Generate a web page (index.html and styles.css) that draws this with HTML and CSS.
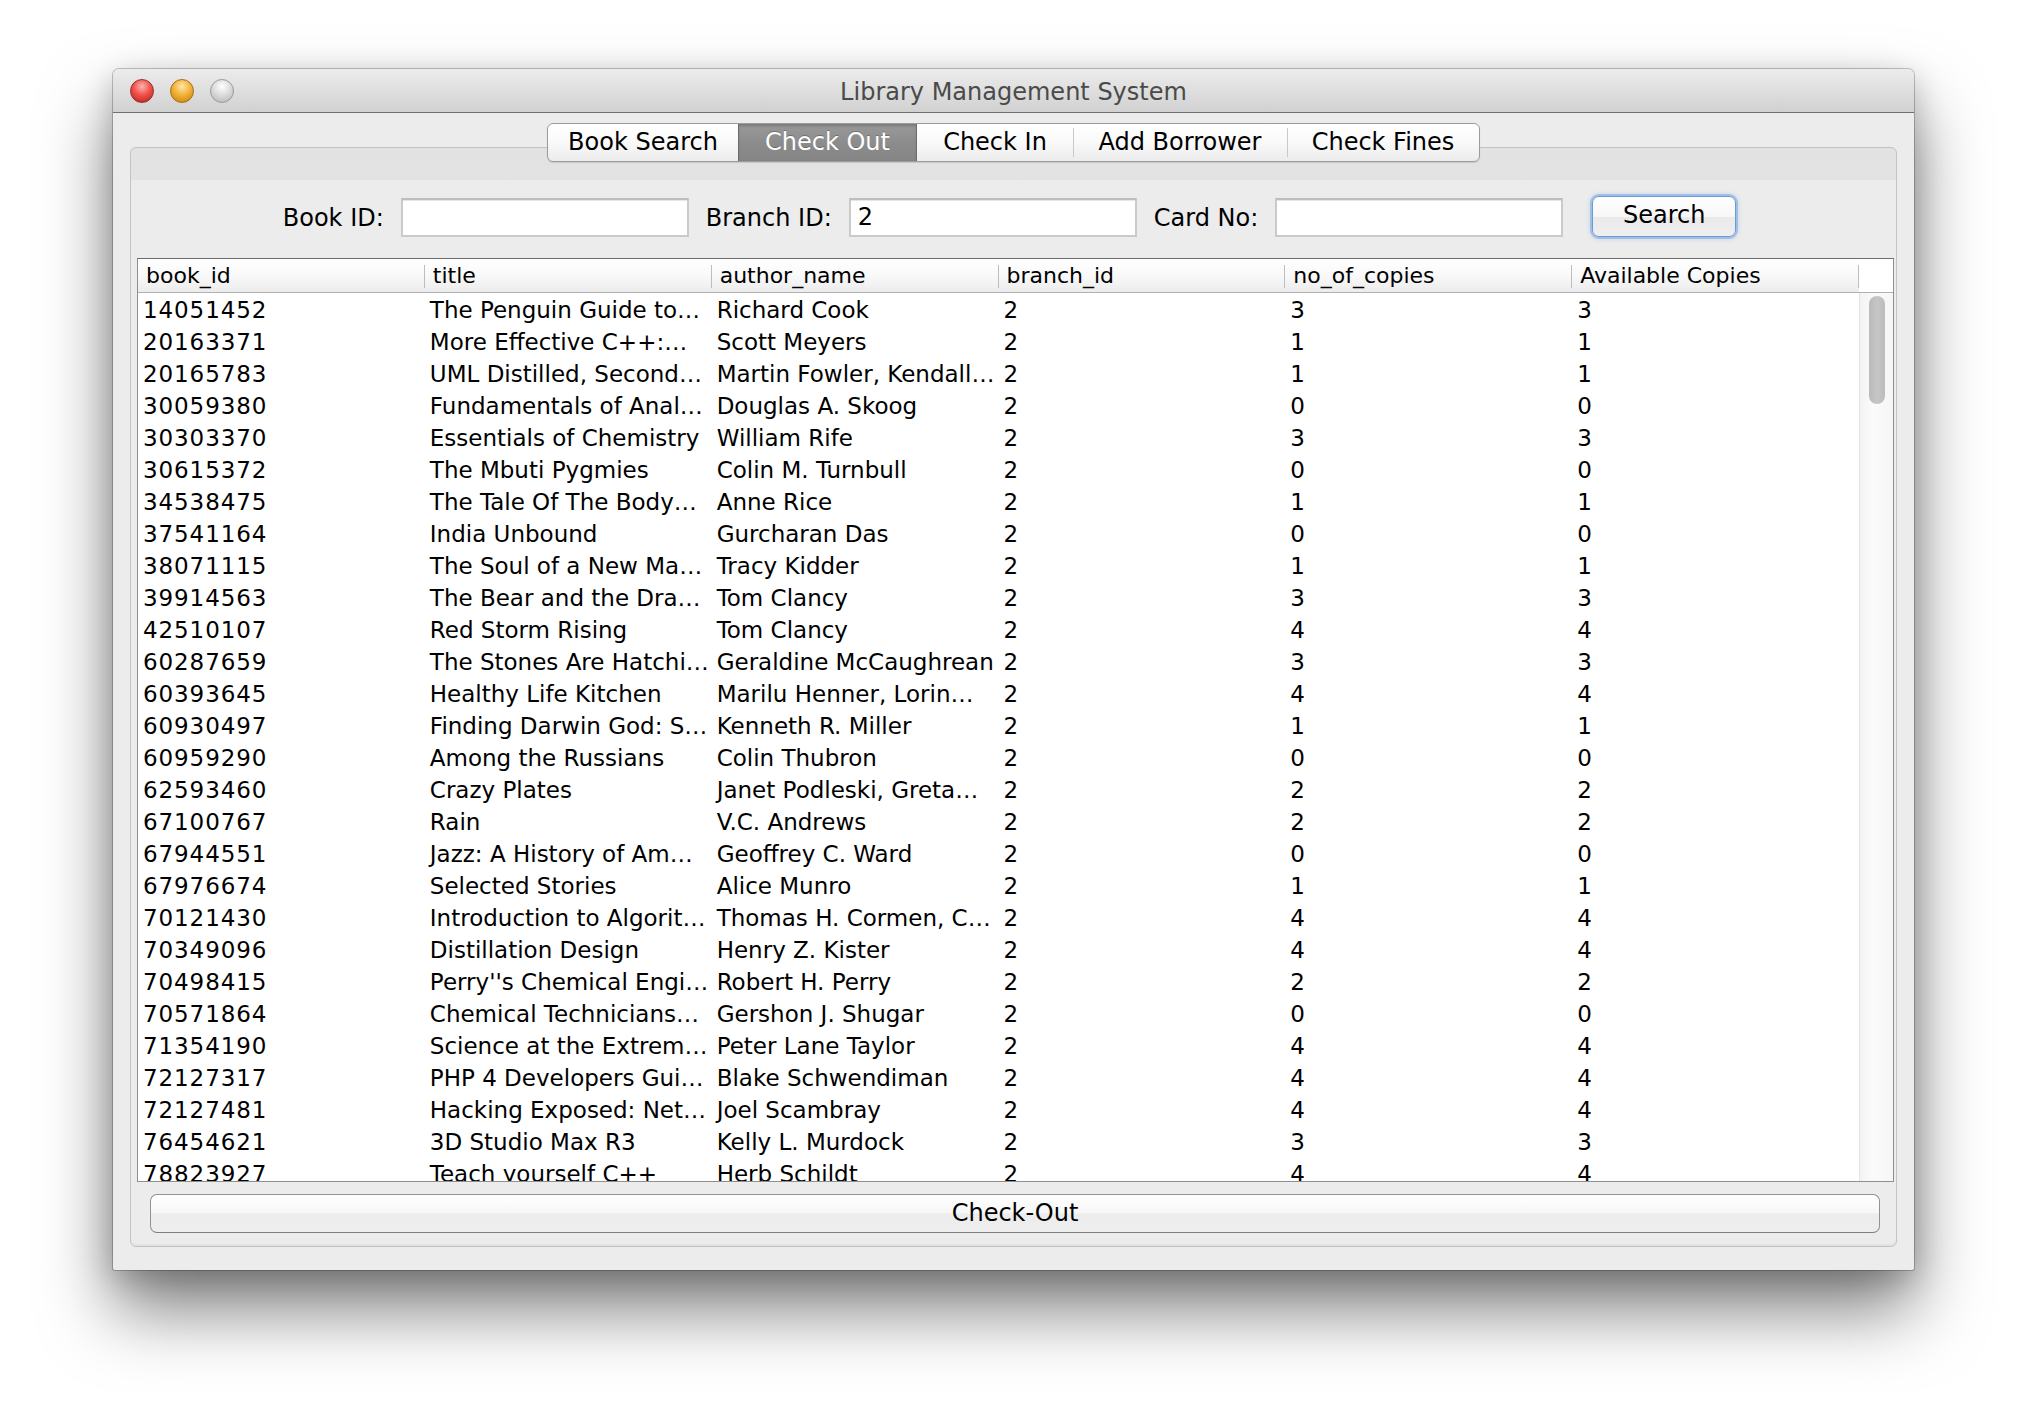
FILE: index.html
```html
<!DOCTYPE html>
<html>
<head>
<meta charset="utf-8">
<title>Library Management System</title>
<link rel="stylesheet" href="styles.css">
</head>
<body>
<div class="window">
  <div class="titlebar">
    <div class="lights">
      <span class="light red"></span>
      <span class="light yellow"></span>
      <span class="light grey"></span>
    </div>
    <div class="wtitle">Library Management System</div>
    <div></div>
  </div>
  <div class="wbody">
    <div class="tabs">
      <div class="tab t-search">Book Search</div>
      <div class="tab sel t-out">Check Out</div>
      <div class="tab t-in">Check In</div>
      <div class="tab sep t-add">Add Borrower</div>
      <div class="tab sep t-fines">Check Fines</div>
    </div>
    <div class="panel">
      <div class="searchrow">
        <label class="lbl">Book ID:</label>
        <div class="field"></div>
        <label class="lbl">Branch ID:</label>
        <div class="field">2</div>
        <label class="lbl">Card No:</label>
        <div class="field"></div>
        <div class="btn search">Search</div>
      </div>
      <div class="table">
        <div class="thead">
          <div class="th">book_id</div>
          <div class="th">title</div>
          <div class="th">author_name</div>
          <div class="th">branch_id</div>
          <div class="th">no_of_copies</div>
          <div class="th">Available Copies</div>
          <div class="corner"></div>
        </div>
        <div class="tbody">
          <div class="rows">
            <div class="row"><div>14051452</div><div>The Penguin Guide to…</div><div>Richard Cook</div><div>2</div><div>3</div><div>3</div></div>
            <div class="row"><div>20163371</div><div>More Effective C++:…</div><div>Scott Meyers</div><div>2</div><div>1</div><div>1</div></div>
            <div class="row"><div>20165783</div><div>UML Distilled, Second…</div><div>Martin Fowler, Kendall…</div><div>2</div><div>1</div><div>1</div></div>
            <div class="row"><div>30059380</div><div>Fundamentals of Anal…</div><div>Douglas A. Skoog</div><div>2</div><div>0</div><div>0</div></div>
            <div class="row"><div>30303370</div><div>Essentials of Chemistry</div><div>William Rife</div><div>2</div><div>3</div><div>3</div></div>
            <div class="row"><div>30615372</div><div>The Mbuti Pygmies</div><div>Colin M. Turnbull</div><div>2</div><div>0</div><div>0</div></div>
            <div class="row"><div>34538475</div><div>The Tale Of The Body…</div><div>Anne Rice</div><div>2</div><div>1</div><div>1</div></div>
            <div class="row"><div>37541164</div><div>India Unbound</div><div>Gurcharan Das</div><div>2</div><div>0</div><div>0</div></div>
            <div class="row"><div>38071115</div><div>The Soul of a New Ma…</div><div>Tracy Kidder</div><div>2</div><div>1</div><div>1</div></div>
            <div class="row"><div>39914563</div><div>The Bear and the Dra…</div><div>Tom Clancy</div><div>2</div><div>3</div><div>3</div></div>
            <div class="row"><div>42510107</div><div>Red Storm Rising</div><div>Tom Clancy</div><div>2</div><div>4</div><div>4</div></div>
            <div class="row"><div>60287659</div><div>The Stones Are Hatchi…</div><div>Geraldine McCaughrean</div><div>2</div><div>3</div><div>3</div></div>
            <div class="row"><div>60393645</div><div>Healthy Life Kitchen</div><div>Marilu Henner, Lorin…</div><div>2</div><div>4</div><div>4</div></div>
            <div class="row"><div>60930497</div><div>Finding Darwin God: S…</div><div>Kenneth R. Miller</div><div>2</div><div>1</div><div>1</div></div>
            <div class="row"><div>60959290</div><div>Among the Russians</div><div>Colin Thubron</div><div>2</div><div>0</div><div>0</div></div>
            <div class="row"><div>62593460</div><div>Crazy Plates</div><div>Janet Podleski, Greta…</div><div>2</div><div>2</div><div>2</div></div>
            <div class="row"><div>67100767</div><div>Rain</div><div>V.C. Andrews</div><div>2</div><div>2</div><div>2</div></div>
            <div class="row"><div>67944551</div><div>Jazz: A History of Am…</div><div>Geoffrey C. Ward</div><div>2</div><div>0</div><div>0</div></div>
            <div class="row"><div>67976674</div><div>Selected Stories</div><div>Alice Munro</div><div>2</div><div>1</div><div>1</div></div>
            <div class="row"><div>70121430</div><div>Introduction to Algorit…</div><div>Thomas H. Cormen, C…</div><div>2</div><div>4</div><div>4</div></div>
            <div class="row"><div>70349096</div><div>Distillation Design</div><div>Henry Z. Kister</div><div>2</div><div>4</div><div>4</div></div>
            <div class="row"><div>70498415</div><div>Perry''s Chemical Engi…</div><div>Robert H. Perry</div><div>2</div><div>2</div><div>2</div></div>
            <div class="row"><div>70571864</div><div>Chemical Technicians…</div><div>Gershon J. Shugar</div><div>2</div><div>0</div><div>0</div></div>
            <div class="row"><div>71354190</div><div>Science at the Extrem…</div><div>Peter Lane Taylor</div><div>2</div><div>4</div><div>4</div></div>
            <div class="row"><div>72127317</div><div>PHP 4 Developers Gui…</div><div>Blake Schwendiman</div><div>2</div><div>4</div><div>4</div></div>
            <div class="row"><div>72127481</div><div>Hacking Exposed: Net…</div><div>Joel Scambray</div><div>2</div><div>4</div><div>4</div></div>
            <div class="row"><div>76454621</div><div>3D Studio Max R3</div><div>Kelly L. Murdock</div><div>2</div><div>3</div><div>3</div></div>
            <div class="row"><div>78823927</div><div>Teach yourself C++</div><div>Herb Schildt</div><div>2</div><div>4</div><div>4</div></div>
          </div>
          <div class="vscroll"><div class="thumb"></div></div>
        </div>
      </div>
      <div class="btn checkout">Check-Out</div>
    </div>
  </div>
</div>
</body>
</html>
```

FILE: styles.css
```css
* { box-sizing: border-box; }

html, body {
  margin: 0;
  background: #ffffff;
}

body {
  height: 1428px;
  overflow: hidden;
  padding: 69px 0 0 113px;
  font-family: "DejaVu Sans", "Liberation Sans", sans-serif;
  color: #000;
}

.window {
  width: 1801px;
  height: 1201px;
  display: flex;
  flex-direction: column;
  background: #ececec;
  border-radius: 6px 6px 2px 2px;
  box-shadow: 0 0 0 1px rgba(0, 0, 0, 0.22),
              0 40px 70px rgba(0, 0, 0, 0.5),
              0 8px 30px rgba(0, 0, 0, 0.2);
}

.titlebar {
  flex: none;
  height: 44px;
  border-bottom: 1px solid #6f6f6f;
  border-radius: 6px 6px 0 0;
  background: linear-gradient(#ececec, #d1d1d1);
  display: grid;
  grid-template-columns: 1fr auto 1fr;
  align-items: center;
}

.lights {
  display: flex;
  gap: 16px;
  padding-left: 17px;
  padding-top: 1px;
}

.light {
  width: 24px;
  height: 24px;
  border-radius: 50%;
  display: block;
}

.light.red {
  background: radial-gradient(circle at 50% 30%, #ffb3ae 0, #f0524c 45%, #c9302a 80%, #a8221d 100%);
  border: 1px solid #9c2b26;
}

.light.yellow {
  background: radial-gradient(circle at 50% 30%, #ffe6a6 0, #f2b33a 45%, #d68f14 80%, #b67510 100%);
  border: 1px solid #a1701c;
}

.light.grey {
  background: radial-gradient(circle at 50% 30%, #ffffff 0, #dcdcdc 45%, #c1c1c1 80%, #a9a9a9 100%);
  border: 1px solid #9a9a9a;
}

.wtitle {
  font-size: 24px;
  color: #4a4a4a;
  padding-top: 3px;
}

.wbody {
  flex: 1;
  min-height: 0;
  display: flex;
  flex-direction: column;
  padding: 10px 17px 23px;
}

.tabs {
  flex: none;
  align-self: center;
  display: flex;
  height: 39px;
  border: 1px solid #9c9c9c;
  border-radius: 6px;
  background: linear-gradient(#ffffff, #fafafa 45%, #ececec);
  position: relative;
  z-index: 1;
  overflow: hidden;
  box-shadow: 0 1px 1px rgba(0, 0, 0, 0.12);
}

.tab {
  position: relative;
  font-size: 24px;
  line-height: 37px;
  white-space: nowrap;
  text-align: center;
}

.t-search { width: 190px; }
.t-out { width: 179px; }
.t-in { width: 156px; }
.t-add { width: 214px; }
.t-fines { width: 192px; }

.tab.sep::before {
  content: "";
  position: absolute;
  left: 0;
  top: 4px;
  bottom: 4px;
  width: 1px;
  background: #c9c9c9;
}

.tab.sel {
  color: #ffffff;
  background: linear-gradient(#9a9a9a, #8c8c8c 50%, #858585);
  box-shadow: inset 1px 0 0 #6c6c6c, inset -1px 0 0 #6c6c6c, inset 0 2px 3px rgba(0, 0, 0, 0.22);
  text-shadow: 0 -1px 0 rgba(0, 0, 0, 0.25);
}

.panel {
  flex: 1;
  min-height: 0;
  margin-top: -15px;
  display: flex;
  flex-direction: column;
  border: 1px solid #c3c3c3;
  border-radius: 6px;
  background: linear-gradient(to bottom, #e2e2e2 0, #e3e3e3 32px, #ececec 32px, #ececec 100%);
  padding: 50px 2px 13px 6px;
  box-shadow: inset 0 -2px 0 #e2e2e2;
}

.searchrow {
  flex: none;
  height: 39px;
  display: flex;
  align-items: center;
  justify-content: center;
  gap: 17px;
  padding-right: 12px;
}

.lbl {
  font-size: 24px;
  white-space: nowrap;
}

.field {
  width: 288px;
  height: 39px;
  background: #ffffff;
  border: 2px solid #cacaca;
  border-top-color: #bdbdbd;
  box-shadow: inset 0 1px 0 #e6e6e6;
  font-size: 24px;
  line-height: 35px;
  padding-left: 7px;
}

.btn {
  font-size: 24px;
  text-align: center;
  border-radius: 7px;
  white-space: nowrap;
}

.search {
  width: 144px;
  height: 41px;
  margin-left: 12px;
  margin-top: -2px;
  line-height: 37px;
  border: 1px solid #6b9ad6;
  background: linear-gradient(#ffffff, #f7f7f7 50%, #e9e9e9 51%, #efefef);
  box-shadow: 0 0 0 2px rgba(120, 165, 225, 0.55), 0 0 4px 2px rgba(120, 165, 225, 0.35);
}

.table {
  flex: 1;
  min-height: 0;
  margin-top: 21px;
  display: flex;
  flex-direction: column;
  background: #ffffff;
  border: 1px solid #8f8f8f;
  border-top-color: #6c6c6c;
  overflow: hidden;
}

.thead {
  height: 34px;
  flex: none;
  display: grid;
  grid-template-columns: repeat(6, 1fr) 34px;
  background: linear-gradient(#ffffff, #f9f9f9 50%, #ececec);
  border-bottom: 1px solid #b0b0b0;
}

.th {
  position: relative;
  font-size: 22px;
  line-height: 33px;
  padding-left: 8px;
  white-space: nowrap;
  overflow: hidden;
}

.th::after {
  content: "";
  position: absolute;
  right: 0;
  top: 6px;
  bottom: 4px;
  width: 1px;
  background: #bdbdbd;
}

.corner {
  background: #ffffff;
}

.tbody {
  flex: 1;
  min-height: 0;
  display: flex;
  overflow: hidden;
}

.rows {
  flex: 1;
  min-width: 0;
}

.row {
  display: grid;
  grid-template-columns: repeat(6, 1fr);
  height: 32px;
  font-size: 23px;
  line-height: 32px;
  padding-top: 1px;
}

.row > div {
  padding-left: 5px;
  white-space: nowrap;
  overflow: hidden;
}

.row > div:first-child {
  letter-spacing: 0.9px;
}

.vscroll {
  width: 34px;
  flex: none;
  background: linear-gradient(to right, #f3f3f3, #fbfbfb 40%, #f6f6f6);
  border-left: 1px solid #e4e4e4;
  padding: 3px 0 0 9px;
}

.thumb {
  width: 16px;
  height: 108px;
  border-radius: 8px;
  background: linear-gradient(to right, #b9b9b9, #c6c6c6 50%, #bcbcbc);
}

.checkout {
  flex: none;
  height: 39px;
  margin: 12px 14px 0 13px;
  line-height: 37px;
  border: 1px solid #929292;
  border-bottom-color: #7e7e7e;
  background: linear-gradient(#ffffff, #f7f7f7 48%, #ececec 52%, #eeeeee);
}
```
